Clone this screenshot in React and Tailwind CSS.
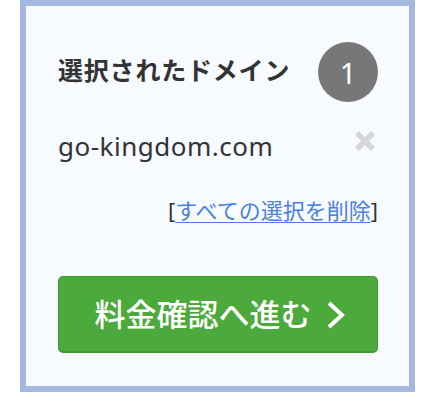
export default function App() {
  const font = { fontFamily: '"Noto Sans", "Noto Sans CJK JP", sans-serif' };
  return (
    <div className="w-[440px] h-[406px] bg-white" style={font}>
      <div className="ml-[20px] w-[395px] border-[6px] border-[#a3b9e0] bg-[#f7faff] pl-[32px] pr-[31px] pt-[36px] pb-[33px]">
        <div className="flex items-center justify-between h-[60px]">
          <div className="text-[25px] font-bold text-[#333333] tracking-[0.8px] leading-[30px] -mt-[4px]">選択されたドメイン</div>
          <div className="w-[60px] h-[60px] rounded-full bg-[#777777] flex items-center justify-center text-white text-[29px] leading-none font-normal">1</div>
        </div>
        <div className="mt-[29px] flex items-center justify-between h-[30px]">
          <div className="text-[26px] leading-[30px] text-[#333333] tracking-[0.5px]">go-kingdom.com</div>
          <svg width="22" height="22" viewBox="0 0 22 22" className="-mt-[10px] mr-[2px]">
            <line x1="3" y1="3" x2="19" y2="19" stroke="#d6d6d6" strokeWidth="5.5" />
            <line x1="19" y1="3" x2="3" y2="19" stroke="#d6d6d6" strokeWidth="5.5" />
          </svg>
        </div>
        <div className="mt-[36px] flex justify-end h-[26px] items-center">
          <span className="text-[22px] leading-[26px] text-[#333333]">[</span>
          <a href="#" className="text-[22px] leading-[26px] text-[#4a80e3] underline decoration-1 underline-offset-[3px]">すべての選択を削除</a>
          <span className="text-[22px] leading-[26px] text-[#333333]">]</span>
        </div>
        <button className="mt-[53px] w-full h-[77px] rounded-[5px] bg-[#4ca93c] border border-[#3f9a31] border-b-[2px] flex items-center justify-center gap-[14px] text-white text-[31px] leading-none font-medium">
          <span className="ml-[4px]">料金確認へ進む</span>
          <svg width="20" height="28" viewBox="0 0 20 28" className="mt-[2px]">
            <polyline points="3,2 16,14 3,26" fill="none" stroke="white" strokeWidth="4" strokeLinecap="butt" strokeLinejoin="miter" />
          </svg>
        </button>
      </div>
    </div>
  );
}
